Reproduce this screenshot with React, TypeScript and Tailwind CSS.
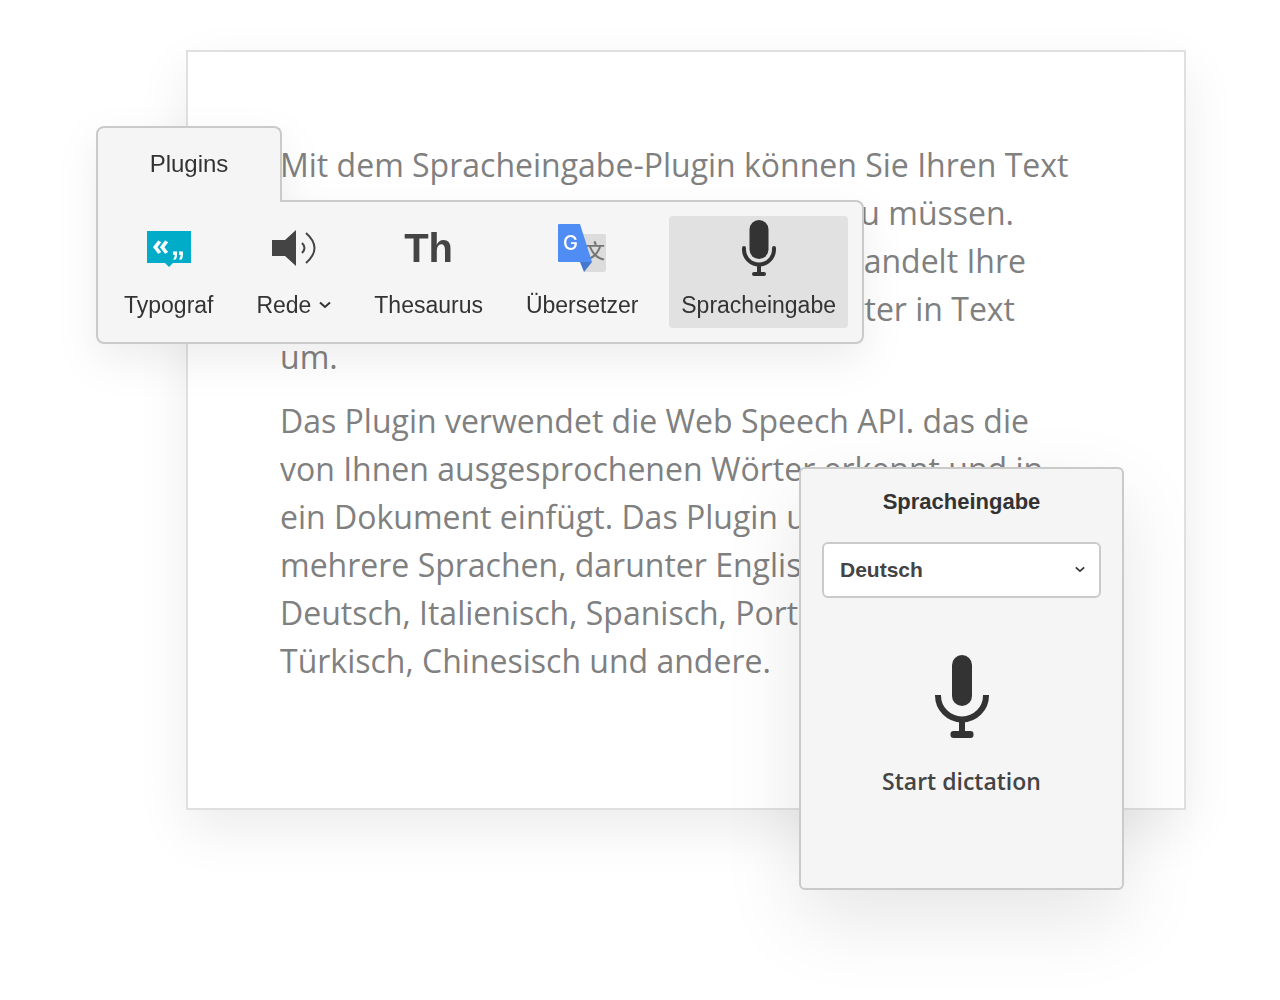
import type { ReactNode } from 'react';

function MicSmall() {
  return (
    <svg width="34" height="56" viewBox="0 0 34 56" aria-hidden="true">
      <rect x="7.500" y="0" width="19" height="39" rx="9.500" fill="#333" />
      <path d="M2 28v1.500a15 15 0 0 0 30 0V28" fill="none" stroke="#333" strokeWidth="4" strokeLinecap="round" />
      <path d="M17 45v8" stroke="#333" strokeWidth="4" />
      <path d="M12 54h10" stroke="#333" strokeWidth="4" strokeLinecap="round" />
    </svg>
  );
}

function MicLarge() {
  return (
    <svg width="54" height="83" viewBox="0 0 54 83" aria-hidden="true">
      <rect x="17" y="0" width="20" height="51" rx="10" fill="#333" />
      <path d="M3 40v.5a24 24 0 0 0 48 0V40" fill="none" stroke="#333" strokeWidth="6" />
      <path d="M27 65v14" stroke="#333" strokeWidth="6" />
      <rect x="15.500" y="76" width="23" height="7" rx="3" fill="#333" />
    </svg>
  );
}

function TypografIcon() {
  return (
    <svg width="44" height="36" viewBox="0 0 44 36" aria-hidden="true" className="overflow-visible">
      <path d="M0 1h44v32H26l-4 4-4-4H0z" fill="#00acc8" />
      <text x="5" y="25" fill="#fff" className="font-['Open_Sans'] text-[28px] font-bold">«</text>
      <text x="24" y="25" fill="#fff" className="font-['Liberation_Sans'] text-[28px] font-bold">„</text>
    </svg>
  );
}

function SpeakerIcon() {
  return (
    <svg width="46" height="36" viewBox="0 0 46 36" aria-hidden="true">
      <path d="M1 10h13L25 0v36L14 26H1z" fill="#444" />
      <path d="M31 13q5 5 0 10M35 3q17 15 0 30" fill="none" stroke="#444" strokeWidth="2" />
    </svg>
  );
}

function TranslateIcon() {
  return (
    <svg width="48" height="48" viewBox="0 0 48 48" aria-hidden="true" className="overflow-visible">
      <path d="M24 10h22q2 0 2 2v34q0 2-2 2H26z" fill="#dcdcdc" />
      <text x="27" y="35" fill="#757575" className="font-['Noto_Sans_CJK_SC'] text-[20px] font-medium">文</text>
      <path d="M22 38h12l-8 10z" fill="#4478cc" />
      <path d="M1 0h21l12 38H1q-1 0-1-1V1q0-1 1-1z" fill="#4f8df5" />
      <text x="5" y="26" fill="#fff" className="font-['Inter'] text-[20px] font-medium">G</text>
    </svg>
  );
}

function Chevron({ className }: { className: string }) {
  return (
    <svg className={className} viewBox="0 0 12 8" aria-hidden="true">
      <path d="M1 1.500 6 6l5-4.500" fill="none" stroke="#333" strokeWidth="2" />
    </svg>
  );
}

function ToolButton({ icon, label, active, menu }: { icon: ReactNode; label: string; active?: boolean; menu?: boolean }) {
  return (
    <button
      type="button"
      aria-pressed={active}
      className={`flex flex-col items-center gap-[9px] rounded px-3 pb-[7px] ${active ? 'bg-[#e1e1e1]' : ''}`}
    >
      <span className="flex h-16 items-center">{icon}</span>
      <span className="flex items-center gap-2 text-[23px] leading-8">
        {label}
        {menu && <Chevron className="h-2 w-3" />}
      </span>
    </button>
  );
}

function Toolbar() {
  return (
    <section
      aria-label="Plugins"
      className="absolute -left-[92px] top-[74px] w-[768px] font-['Liberation_Sans',sans-serif] text-[#333] drop-shadow-[0_16px_20px_rgba(0,0,0,0.07)]"
    >
      <button
        type="button"
        className="relative -mb-[2px] flex h-[76px] w-[186px] justify-center rounded-t-lg border-2 border-b-0 border-[#cacaca] bg-[#f5f5f5] pt-5 text-2xl"
      >
        Plugins
      </button>
      <div className="flex justify-between rounded-b-lg rounded-tr-lg border-2 border-[#cacaca] bg-[#f5f5f5] p-[14px]">
        <ToolButton icon={<TypografIcon />} label="Typograf" />
        <ToolButton icon={<SpeakerIcon />} label="Rede" menu />
        <ToolButton icon={<span className="text-[40px] font-bold text-[#444]">Th</span>} label="Thesaurus" />
        <ToolButton icon={<TranslateIcon />} label="Übersetzer" />
        <ToolButton icon={<MicSmall />} label="Spracheingabe" active />
      </div>
    </section>
  );
}

function DictationPanel() {
  return (
    <section
      aria-labelledby="dictation-title"
      className="absolute right-[60px] top-[415px] w-[325px] rounded-md border-2 border-[#cacaca] bg-[#f5f5f5] px-[21px] pb-[87px] pt-[17px] text-center shadow-[0_30px_80px_rgba(0,0,0,0.1)]"
    >
      <h2 id="dictation-title" className="font-['Liberation_Sans',sans-serif] text-[22px] font-bold leading-8 text-[#333]">
        Spracheingabe
      </h2>
      <div className="relative mt-[23px]">
        <select
          aria-label="Sprache"
          className="h-14 w-full appearance-none rounded-md border-2 border-[#cacaca] bg-white px-4 font-['Liberation_Sans',sans-serif] text-[21px] font-bold text-[#444]"
        >
          <option>Deutsch</option>
          <option>English</option>
          <option>Italiano</option>
        </select>
        <Chevron className="pointer-events-none absolute right-4 top-[25px] h-[7px] w-[10px]" />
      </div>
      <button type="button" className="mt-[57px] inline-flex flex-col items-center gap-[23px] font-['Open_Sans',sans-serif] text-[23px] font-semibold leading-10 text-[#444]">
        <MicLarge />
        Start dictation
      </button>
    </section>
  );
}

export default function App() {
  return (
    <main className="min-h-screen overflow-hidden bg-white pb-[190px] pl-[186px] pr-[94px] pt-[50px]">
      <article className="relative border-2 border-[#e0e0e0] bg-white pb-[123px] pl-[92px] pt-[89px] font-['Open_Sans',sans-serif] text-[32px] leading-[48px] text-[#808080] shadow-[0_20px_50px_rgba(0,0,0,0.08)]">
        <p className="whitespace-nowrap">
          Mit dem Spracheingabe-Plugin können Sie Ihren Text
          <span className="block w-[734px] text-right">zu müssen.</span>
          <span className="block w-[746px] text-right">wandelt Ihre</span>
          <span className="block w-[735px] text-right">Wörter in Text</span>
          um.
        </p>
        <p className="mt-4 whitespace-nowrap">
          Das Plugin verwendet die Web Speech API. das die
          <br />
          von Ihnen ausgesprochenen Wörter erkennt und in
          <br />
          ein Dokument einfügt. Das Plugin unterstützt
          <br />
          mehrere Sprachen, darunter Englisch,
          <br />
          Deutsch, Italienisch, Spanisch, Portugiesisch,
          <br />
          Türkisch, Chinesisch und andere.
        </p>
        <Toolbar />
        <DictationPanel />
      </article>
    </main>
  );
}
